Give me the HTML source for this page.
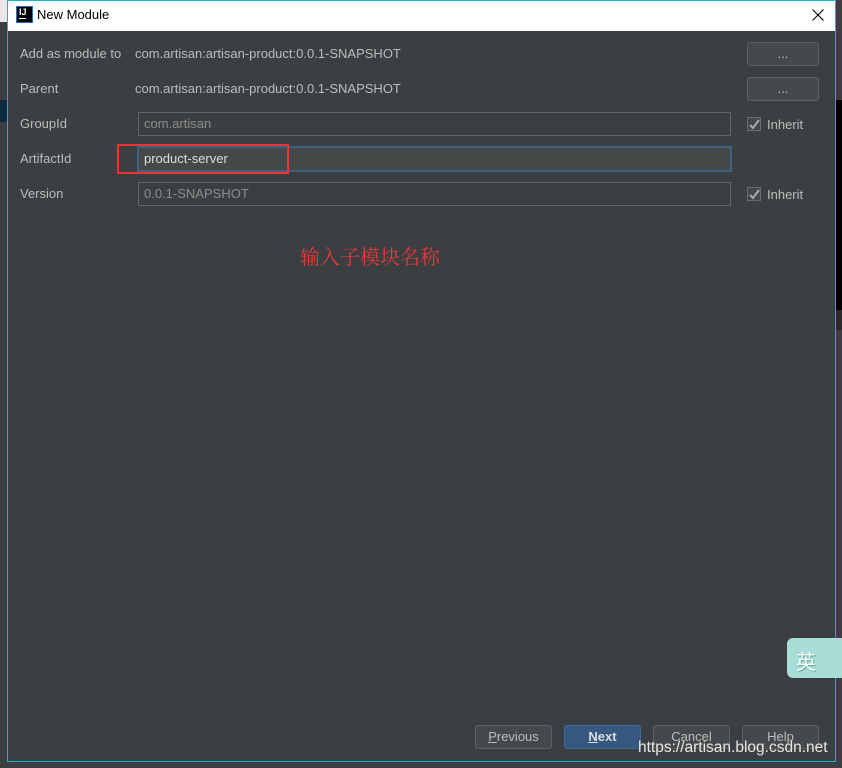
<!DOCTYPE html>
<html><head><meta charset="utf-8"><style>
*{margin:0;padding:0;box-sizing:border-box}
body{width:842px;height:768px;overflow:hidden;background:#3c3f41;position:relative;font-family:"Liberation Sans","Noto Sans CJK SC",sans-serif;font-size:13px;color:#bcbcbc}
.abs{position:absolute}
</style></head><body>
<div class="abs" style="left:0;top:0;width:7px;height:768px;background:#3c3f41"></div>
<div class="abs" style="left:0;top:0;width:7px;height:22px;background:#e8e8e8"></div>
<div class="abs" style="left:0;top:100px;width:7px;height:22px;background:#0d293e"></div>
<div class="abs" style="left:835px;top:0;width:7px;height:768px;background:#3c3f41"></div>
<div class="abs" style="left:835px;top:100px;width:7px;height:210px;background:#000"></div>
<div class="abs" style="left:835px;top:310px;width:7px;height:20px;background:#2b2b2b"></div>
<div class="abs" style="left:7px;top:0;width:829px;height:762px;border:1px solid #10b6c9;background:#3c3f41"></div>
<div class="abs" style="left:8px;top:1px;width:827px;height:30px;background:#fff"></div>
<div class="abs" style="left:16px;top:6px;width:17px;height:17px;background:#000;border:1px solid #2a6fbf"></div>
<div class="abs" style="left:19px;top:7px;color:#fff;font-size:9px;font-weight:bold">IJ</div>
<div class="abs" style="left:19px;top:18px;width:7px;height:1px;background:#fff"></div>
<div class="abs" style="left:37px;top:7px;color:#000;font-size:13px">New Module</div>
<svg class="abs" style="left:812px;top:9px" width="12" height="12"><path d="M0.5 0.5L11.5 11.5M11.5 0.5L0.5 11.5" stroke="#000" stroke-width="1.1"/></svg>
<div class="abs" style="left:20px;top:46px">Add as module to</div>
<div class="abs" style="left:135px;top:46px">com.artisan:artisan-product:0.0.1-SNAPSHOT</div>
<div class="abs" style="left:20px;top:81px">Parent</div>
<div class="abs" style="left:135px;top:81px">com.artisan:artisan-product:0.0.1-SNAPSHOT</div>
<div class="abs" style="left:20px;top:116px">GroupId</div>
<div class="abs" style="left:20px;top:151px">ArtifactId</div>
<div class="abs" style="left:20px;top:186px">Version</div>
<div class="abs" style="left:747px;top:42px;width:72px;height:24px;border:1px solid #5e6060;border-radius:3px;background:#46494b;text-align:center;line-height:22px">...</div>
<div class="abs" style="left:747px;top:77px;width:72px;height:24px;border:1px solid #5e6060;border-radius:3px;background:#46494b;text-align:center;line-height:22px">...</div>
<div class="abs" style="left:138px;top:112px;width:593px;height:24px;border:1px solid #646464;padding:3px 5px;color:#8c8c8c">com.artisan</div>
<div class="abs" style="left:137px;top:146px;width:595px;height:26px;border:2px solid #3d6185;background:#45494a;padding:3px 5px;color:#ddd">product-server</div>
<div class="abs" style="left:117px;top:144px;width:172px;height:30px;border:2px solid #f03333"></div>
<div class="abs" style="left:138px;top:182px;width:593px;height:24px;border:1px solid #646464;padding:3px 5px;color:#8c8c8c">0.0.1-SNAPSHOT</div>
<div class="abs" style="left:747px;top:117px;width:14px;height:14px;border:1px solid #6b6b6b;background:#43494a"></div>
<svg class="abs" style="left:749px;top:119px" width="11" height="11"><path d="M1 6L4 9L10 1" stroke="#aaa" stroke-width="2" fill="none"/></svg>
<div class="abs" style="left:767px;top:117px">Inherit</div>
<div class="abs" style="left:747px;top:187px;width:14px;height:14px;border:1px solid #6b6b6b;background:#43494a"></div>
<svg class="abs" style="left:749px;top:189px" width="11" height="11"><path d="M1 6L4 9L10 1" stroke="#aaa" stroke-width="2" fill="none"/></svg>
<div class="abs" style="left:767px;top:187px">Inherit</div>
<div class="abs" style="left:300px;top:241px;color:#e5393a;font-size:20px;font-family:'Noto Serif CJK SC','Noto Sans CJK SC',serif">输入子模块名称</div>
<div class="abs" style="left:475px;top:725px;width:77px;height:24px;border:1px solid #5e6060;border-radius:3px;background:#46494b;text-align:center;line-height:22px"><u>P</u>revious</div>
<div class="abs" style="left:564px;top:725px;width:77px;height:24px;border:1px solid #3b6aa0;border-radius:3px;background:#365880;text-align:center;line-height:22px;font-weight:bold;color:#ddd"><u>N</u>ext</div>
<div class="abs" style="left:653px;top:725px;width:77px;height:24px;border:1px solid #5e6060;border-radius:3px;background:#46494b;text-align:center;line-height:22px">Cancel</div>
<div class="abs" style="left:742px;top:725px;width:77px;height:24px;border:1px solid #5e6060;border-radius:3px;background:#46494b;text-align:center;line-height:22px">Help</div>
<div class="abs" style="left:638px;top:739px;color:#e6e6e6;font-size:15.5px;text-shadow:0 0 1px #555">https://artisan.blog.csdn.net</div>
<div class="abs" style="left:787px;top:638px;width:60px;height:40px;border-radius:6px;background:#a8ddd8"></div>
<div class="abs" style="left:796px;top:646px;color:#fff;font-size:20px;text-shadow:1px 1px 1px #5a8">英</div>
</body></html>
